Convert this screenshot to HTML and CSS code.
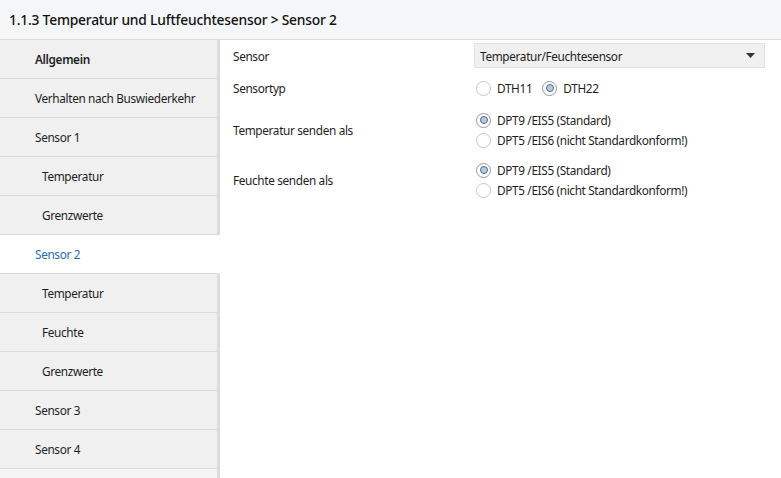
FILE: index.html
```html
<!DOCTYPE html>
<html lang="de">
<head>
<meta charset="utf-8">
<title>Sensor 2</title>
<link rel="stylesheet" href="styles.css">
</head>
<body>
<header class="title">1.1.3 Temperatur und Luftfeuchtesensor &gt; Sensor 2</header>
<div class="main">
  <nav class="side">
    <div class="item bold">Allgemein</div>
    <div class="item">Verhalten nach Buswiederkehr</div>
    <div class="item">Sensor 1</div>
    <div class="item sub">Temperatur</div>
    <div class="item sub">Grenzwerte</div>
    <div class="item active">Sensor 2</div>
    <div class="item sub">Temperatur</div>
    <div class="item sub">Feuchte</div>
    <div class="item sub">Grenzwerte</div>
    <div class="item">Sensor 3</div>
    <div class="item">Sensor 4</div>
    <div class="rest"></div>
  </nav>
  <section class="content">
    <div class="row r-sensor">
      <div class="label">Sensor</div>
      <div class="select">
        <span>Temperatur/Feuchtesensor</span>
        <svg class="caret" width="9" height="5" viewBox="0 0 9 5"><path d="M0 0H9L4.5 5Z" fill="#333"/></svg>
      </div>
    </div>
    <div class="row r-typ">
      <div class="label">Sensortyp</div>
      <div class="radios inline">
        <label class="radio"><span class="dot"></span>DTH11</label>
        <label class="radio"><span class="dot on"></span>DTH22</label>
      </div>
    </div>
    <div class="row r-temp">
      <div class="label">Temperatur senden als</div>
      <div class="radios">
        <label class="radio"><span class="dot on"></span>DPT9 /EIS5 (Standard)</label>
        <label class="radio"><span class="dot"></span>DPT5 /EIS6 (nicht Standardkonform!)</label>
      </div>
    </div>
    <div class="row r-feu">
      <div class="label">Feuchte senden als</div>
      <div class="radios">
        <label class="radio"><span class="dot on"></span>DPT9 /EIS5 (Standard)</label>
        <label class="radio"><span class="dot"></span>DPT5 /EIS6 (nicht Standardkonform!)</label>
      </div>
    </div>
  </section>
</div>
</body>
</html>
```
FILE: styles.css
```css
* { box-sizing: border-box; }
html, body { margin: 0; height: 100%; }
body {
  font-family: "Noto Sans", "Open Sans", sans-serif;
  font-size: 11.8px;
  letter-spacing: -0.35px;
  color: #1e1e1e;
  background: #fff;
  overflow: hidden;
}
.title {
  height: 40px;
  background: #f5f6f7;
  border-bottom: 1px solid #dcdcdc;
  padding: 0 9px;
  display: flex;
  align-items: center;
  font-size: 13.8px;
  letter-spacing: -0.2px;
  font-weight: 500;
  color: #111;
}
.main {
  display: flex;
  height: calc(100% - 40px);
}
.side {
  width: 220px;
  flex: none;
  display: flex;
  flex-direction: column;
}
.item {
  height: 39px;
  flex: none;
  display: flex;
  align-items: center;
  padding-left: 35px;
  background: #f0f0f0;
  border-bottom: 1px solid #dadada;
  border-right: 3px solid #dcdcdc;
  color: #1e1e1e;
}
.item.sub { padding-left: 42px; }
.item.bold { font-weight: 600; }
.item.active {
  background: #fff;
  color: #1c6fb7;
  border-right-color: #fff;
}
.rest {
  flex: 1;
  background: #f4f5f7;
  border-right: 3px solid #dcdcdc;
}
.content {
  flex: 1;
  padding: 3px 16px 0 13px;
  display: flex;
  flex-direction: column;
}
.row {
  display: flex;
  align-items: center;
}
.label { width: 241px; flex: none; }
.r-sensor { height: 25px; }
.r-typ { height: 26px; margin-top: 7px; }
.r-temp { margin-top: 9px; }
.r-feu { margin-top: 10px; }
.select {
  flex: 1;
  height: 25px;
  background: #f0f0f0;
  border: 1px solid #e3e3e3;
  display: flex;
  align-items: center;
  justify-content: space-between;
  padding: 0 9px 0 5px;
}
.caret { display: block; }
.radios { display: flex; flex-direction: column; }
.radios.inline { flex-direction: row; gap: 8px; }
.radio {
  display: flex;
  align-items: center;
  height: 20px;
  padding-left: 2px;
}
.dot {
  width: 15px;
  height: 15px;
  border-radius: 50%;
  border: 1px solid #c8c8c8;
  background: #fff;
  margin-right: 6px;
  position: relative;
}
.dot.on { border-color: #999; }
.dot.on::after {
  content: "";
  position: absolute;
  left: 2.5px; top: 2.5px;
  width: 8px; height: 8px;
  border-radius: 50%;
  background: #b9c9dc;
  border: 1px solid #4d6b8f;
  box-sizing: border-box;
}
```
